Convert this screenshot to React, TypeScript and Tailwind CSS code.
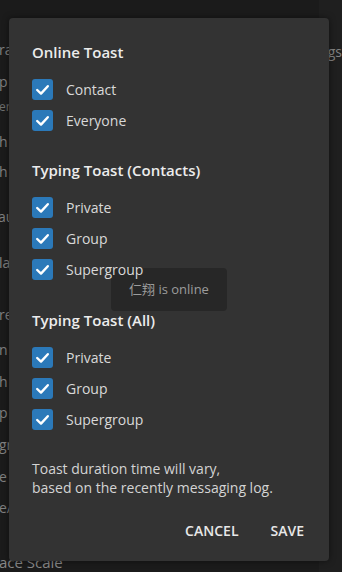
import React from "react";

function Check() {
  return (
    <span className="flex h-[21px] w-[21px] shrink-0 items-center justify-center rounded-[3px] bg-[#2b79b9]">
      <svg width="21" height="21" viewBox="0 0 21 21" fill="none">
        <path d="M5.2 11 L9 14.6 L15.8 7.2" stroke="#ffffff" strokeWidth="2.4" strokeLinecap="round" strokeLinejoin="round" />
      </svg>
    </span>
  );
}

function Row({ label }: { label: string }) {
  return (
    <div className="flex h-[31px] items-center gap-[13px]">
      <Check />
      <span className="text-[14px] leading-[20px] text-[#d9d9d9]">{label}</span>
    </div>
  );
}

function Heading({ children, className }: { children: React.ReactNode; className: string }) {
  return (
    <div className={"text-[15px] font-semibold leading-[20px] text-[#ececec] " + className}>{children}</div>
  );
}

export default function App() {
  return (
    <div className="relative h-[572px] w-[342px] overflow-hidden bg-[#1b1b1b] font-['Open_Sans',sans-serif]">
      {/* dimmed page behind the dialog */}
      <div className="flex h-full w-full text-[#808080]">
        <div className="flex w-[330px] flex-col text-[14px] leading-[16px]">
          <div className="-ml-[1px] mt-[42px] h-4">ra</div>
          <div className="-ml-[1px] mt-[16px] h-4">p</div>
          <div className="-ml-[1px] mt-[9px] h-4 text-[12px] text-[#6e6e6e]">er</div>
          <div className="-ml-[1px] mt-[19px] h-4">h</div>
          <div className="-ml-[1px] mt-[14px] h-4">h</div>
          <div className="-ml-[2px] mt-[29px] h-4">au</div>
          <div className="-ml-[1px] mt-[30px] h-4">la</div>
          <div className="-ml-[1px] mt-[36px] h-4">re</div>
          <div className="-ml-[1px] mt-[19px] h-4">n</div>
          <div className="-ml-[1px] mt-[16px] h-4">h</div>
          <div className="-ml-[1px] mt-[15px] h-4">p</div>
          <div className="-ml-[1px] mt-[16px] h-4">gr</div>
          <div className="-ml-[1px] mt-[16px] h-4">e</div>
          <div className="-ml-[1px] mt-[15px] h-4">e/</div>
          <div className="-ml-[1px] mt-[38px] h-4 text-[15px] text-[#888888]">ace Scale</div>
        </div>
        <div className="flex flex-1 flex-col bg-[#1f1f1f]">
          <div className="mt-[44px] text-[14px] leading-[16px] text-[#828282]">ngs</div>
        </div>
      </div>

      {/* dialog */}
      <div className="absolute left-[9px] top-[18px] flex h-[543px] w-[320px] flex-col rounded-[4px] bg-[#333333] pl-[23px] pr-[25px] pt-[24px] shadow-[0_0_6px_rgba(0,0,0,0.5)]">
        {/* toast, drawn beneath the dialog's text */}
        <div className="absolute left-[102px] top-[250px] flex h-[43px] w-[116px] items-center justify-center rounded-[4px] bg-[#272727] font-['Open_Sans','Noto_Sans_CJK_SC',sans-serif] text-[13px] text-[#9c9c9c]">
          仁翔 is online
        </div>
        <div className="relative flex flex-col">
          <Heading className="">Online Toast</Heading>
          <div className="mt-3 flex flex-col">
            <Row label="Contact" />
            <Row label="Everyone" />
          </div>
          <Heading className="mt-6">Typing Toast (Contacts)</Heading>
          <div className="mt-3 flex flex-col">
            <Row label="Private" />
            <Row label="Group" />
            <Row label="Supergroup" />
          </div>
          <Heading className="mt-[25px]">Typing Toast (All)</Heading>
          <div className="mt-3 flex flex-col">
            <Row label="Private" />
            <Row label="Group" />
            <Row label="Supergroup" />
          </div>
          <p className="mt-6 text-[14px] leading-[19px] text-[#d4d4d4]">
            Toast duration time will vary,
            <br />
            based on the recently messaging log.
          </p>
          <div className="mt-6 flex justify-end gap-8 text-[14px] font-semibold leading-[20px] text-[#e8e8e8]">
            <span>CANCEL</span>
            <span>SAVE</span>
          </div>
        </div>
      </div>
    </div>
  );
}
